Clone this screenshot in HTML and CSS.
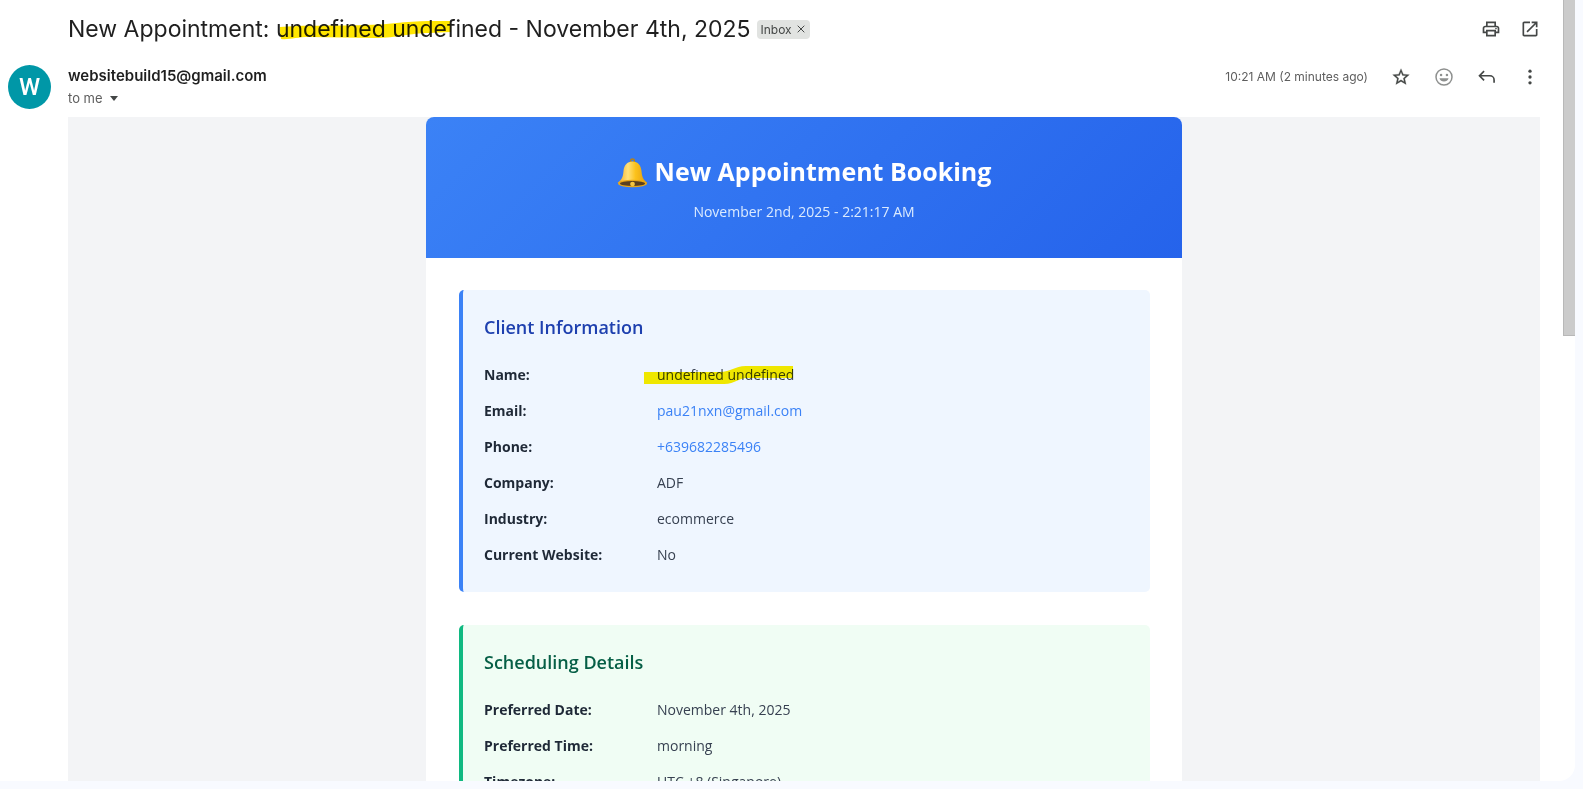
FILE: index.html
```html
<!DOCTYPE html>
<html lang="en">
<head>
<meta charset="utf-8">
<meta name="viewport" content="width=device-width, initial-scale=1">
<title>New Appointment</title>
<link rel="stylesheet" href="styles.css">
</head>
<body>
<div class="app">
  <main class="pane">
    <div class="mail">
      <header class="subject-bar">
        <h1 class="subject">New Appointment: <span class="marked">undefined undefined<svg class="marker marker-subject" viewBox="0 0 172 20" preserveAspectRatio="none" aria-hidden="true"><path d="M1 7 C20 5 60 6 85 5 C110 5 125 1 150 1 L171 1 L172 12 L150 13 C130 13 120 18 95 18 L30 17 C18 17 10 20 2 19 L1 12 Z"/></svg></span> - November 4th, 2025</h1>
        <div class="chip">
          <a class="chip-label" href="#">Inbox</a>
          <button class="chip-close" type="button" aria-label="Remove label Inbox"><svg viewBox="0 0 8 8"><path d="M.7.7l6.6 6.6M7.3.7L.7 7.3" fill="none" stroke="currentColor"/></svg></button>
        </div>
        <div class="actions">
          <button class="icon" type="button" aria-label="Print all"><svg viewBox="0 0 24 24"><path d="M19 8h-1V3H6v5H5c-1.660 0-3 1.340-3 3v6h4v4h12v-4h4v-6c0-1.660-1.340-3-3-3zM8 5h8v3H8V5zm8 14H8v-4h8v4zm2-4v-2H6v2H4v-4c0-.55.45-1 1-1h14c.55 0 1 .45 1 1v4h-2z"/><circle cx="18" cy="11.500" r="1"/></svg></button>
          <button class="icon" type="button" aria-label="Open in new window"><svg viewBox="0 0 24 24"><path d="M19 19H5V5h7V3H5c-1.110 0-2 .9-2 2v14c0 1.100.89 2 2 2h14c1.100 0 2-.9 2-2v-7h-2v7zM14 3v2h3.590l-9.830 9.830 1.410 1.410L19 6.410V10h2V3h-7z"/></svg></button>
        </div>
      </header>

      <div class="sender-bar">
        <span class="avatar" aria-hidden="true">W</span>
        <div class="sender">
          <span class="sender-name">websitebuild15@gmail.com</span>
          <button class="recipient" type="button">to me <span class="caret"></span></button>
        </div>
        <div class="meta">
          <time class="time">10:21 AM (2 minutes ago)</time>
          <button class="icon" type="button" aria-label="Star"><svg viewBox="0 0 24 24"><path d="M22 9.240l-7.190-.62L12 2 9.190 8.630 2 9.240l5.460 4.730L5.820 21 12 17.270 18.180 21l-1.630-7.030L22 9.240zM12 15.400l-3.760 2.270 1-4.280-3.320-2.880 4.380-.38L12 6.100l1.710 4.040 4.380.38-3.320 2.880 1 4.280L12 15.400z" stroke="currentColor" stroke-width=".3"/></svg></button>
          <button class="icon icon-soft" type="button" aria-label="Add reaction"><svg viewBox="0 0 24 24"><circle cx="12" cy="12" r="9.600" fill="none" stroke="currentColor" stroke-width="1.800"/><circle cx="8.500" cy="9.500" r="1.500"/><circle cx="15.500" cy="9.500" r="1.500"/><path d="M6.500 13.500h11c-.8 2.500-2.900 4-5.500 4s-4.700-1.500-5.500-4z"/></svg></button>
          <button class="icon" type="button" aria-label="Reply"><svg viewBox="0 0 24 24"><path d="M8.500 5L3 10.500 8.500 16M3 10.500h12.500a5 5 0 0 1 5 5V19" fill="none" stroke="currentColor" stroke-width="2"/></svg></button>
          <button class="icon" type="button" aria-label="More"><svg viewBox="0 0 24 24"><circle cx="12" cy="5" r="2"/><circle cx="12" cy="12" r="2"/><circle cx="12" cy="19" r="2"/></svg></button>
        </div>
      </div>

      <div class="mail-body">
        <article class="card">
          <header class="banner">
            <h2 class="banner-title">
              <svg class="bell" viewBox="0 0 30 30" aria-hidden="true">
                <defs><linearGradient id="gold"><stop offset="0" stop-color="#f2a71b"/><stop offset=".35" stop-color="#ffe07a"/><stop offset=".6" stop-color="#fcc21b"/><stop offset="1" stop-color="#e09a10"/></linearGradient></defs>
                <circle cx="15.500" cy="2.800" r="1.900" fill="none" stroke="#b5801c" stroke-width="1.500"/>
                <path d="M15.500 3.500c-5.500 0-8.500 4-9 9.500-.5 6-1.500 8.500-6 12h30c-4.500-3.500-5.500-6-6-12-.5-5.500-3.500-9.500-9-9.500z" fill="url(#gold)"/>
                <ellipse cx="15.500" cy="25.500" rx="14.500" ry="3.800" fill="#e8a71b"/>
                <ellipse cx="15.500" cy="25.500" rx="12.500" ry="2.500" fill="#5a3f20"/>
                <ellipse cx="15.500" cy="26" rx="2.400" ry="2.200" fill="#f4c542"/>
              </svg>
              <span>New Appointment Booking</span>
            </h2>
            <p class="banner-date">November 2nd, 2025 - 2:21:17 AM</p>
          </header>

          <div class="sections">
            <section class="section section-client">
              <h3 class="section-title">Client Information</h3>
              <table class="details">
                <tr><th scope="row">Name:</th><td><span class="marked">undefined undefined<svg class="marker marker-name" viewBox="0 0 150 19" preserveAspectRatio="none" aria-hidden="true"><path d="M0 6H75C88 6 90 0 102 0H149V12H104C93 12 92 18 80 18H0Z"/></svg></span></td></tr>
                <tr><th scope="row">Email:</th><td><a href="mailto:pau21nxn@gmail.com">pau21nxn@gmail.com</a></td></tr>
                <tr><th scope="row">Phone:</th><td><a href="tel:+639682285496">+639682285496</a></td></tr>
                <tr><th scope="row">Company:</th><td>ADF</td></tr>
                <tr><th scope="row">Industry:</th><td>ecommerce</td></tr>
                <tr><th scope="row">Current Website:</th><td>No</td></tr>
              </table>
            </section>

            <section class="section section-schedule">
              <h3 class="section-title">Scheduling Details</h3>
              <table class="details">
                <tr><th scope="row">Preferred Date:</th><td>November 4th, 2025</td></tr>
                <tr><th scope="row">Preferred Time:</th><td>morning</td></tr>
                <tr><th scope="row">Timezone:</th><td>UTC +8 (Singapore)</td></tr>
              </table>
            </section>
          </div>
        </article>
      </div>
    </div>
    <div class="scrollbar" aria-hidden="true"><div class="thumb"></div></div>
  </main>
</div>
</body>
</html>
```
FILE: styles.css
```css
* {
  box-sizing: border-box;
}

body {
  margin: 0;
  background: #f8fafd;
  color: #1f1f1f;
  font-family: Inter, Roboto, "Liberation Sans", sans-serif;
}

h1, h2, h3, p {
  margin: 0;
}

button {
  padding: 0;
  border: 0;
  background: none;
  color: inherit;
  font: inherit;
  cursor: pointer;
}

a {
  color: inherit;
  text-decoration: none;
}

svg {
  display: block;
  fill: currentColor;
}

.app {
  height: 100vh;
  padding: 0 8px 8px 0;
  background: #f8faff;
}

.pane {
  display: flex;
  height: 100%;
  overflow: hidden;
  border-radius: 0 0 16px 0;
  background: #fff;
}

.mail {
  flex: 1;
  min-width: 0;
  padding: 0 23px 0 8px;
}

.scrollbar {
  width: 12px;
}

.thumb {
  height: 43%;
  border: solid #b8b8b8;
  border-width: 0 0 1px 1px;
  background: #cbcbcb;
}

/* Subject */
.subject-bar {
  display: flex;
  align-items: center;
  height: 58px;
  padding-left: 60px;
}

.subject {
  font-size: 23px;
  font-weight: 400;
  line-height: 32px;
  white-space: nowrap;
}

.marked {
  position: relative;
}

.marker {
  position: absolute;
  fill: #ffe600;
  mix-blend-mode: multiply;
}

.marker-subject {
  top: 5px;
  left: 3px;
  width: 172px;
  height: 20px;
}

.marker-name {
  top: 1px;
  left: -13px;
  width: 150px;
  height: 19px;
  fill: #fff000;
}

.chip {
  display: flex;
  align-items: center;
  gap: 5px;
  height: 19px;
  margin-left: 6px;
  padding: 0 5px 0 4px;
  border-radius: 4px;
  background: #e1e3e1;
  color: #444746;
  font-size: 12px;
}

.chip-close svg {
  width: 8px;
  height: 8px;
}

.actions {
  display: flex;
  gap: 19px;
  margin-left: auto;
}

.icon {
  color: #444746;
}

.icon svg {
  width: 20px;
  height: 20px;
}

.icon-soft {
  color: #8e908f;
}

/* Sender */
.sender-bar {
  display: flex;
  align-items: flex-start;
  height: 59px;
  padding-top: 7px;
}

.avatar {
  flex: none;
  width: 43px;
  height: 44px;
  margin-right: 17px;
  border-radius: 50%;
  background: #0097a7;
  color: #fff;
  font-family: Roboto, sans-serif;
  font-size: 24px;
  font-weight: 500;
  line-height: 45px;
  text-align: center;
}

.sender {
  display: flex;
  flex-direction: column;
  align-items: flex-start;
}

.sender-name {
  font-size: 15px;
  font-weight: 600;
  line-height: 22px;
}

.recipient {
  display: flex;
  align-items: center;
  gap: 7px;
  color: #5e5e5e;
  font-size: 13px;
  line-height: 22px;
}

.caret {
  border: 4px solid transparent;
  border-top: 5px solid #444746;
  border-bottom: 0;
}

.meta {
  display: flex;
  align-items: center;
  gap: 23px;
  height: 23px;
  margin-left: auto;
}

.time {
  color: #5e5e5e;
  font-size: 12px;
}

/* Message */
.mail-body {
  margin-left: 60px;
  background: #f3f4f6;
  font-family: "Open Sans", "Noto Sans", sans-serif;
}

.card {
  max-width: 756px;
  margin: 0 auto;
  overflow: hidden;
  border-radius: 8px;
  background: #fff;
}

.banner {
  padding: 36px 32px 34px;
  background: linear-gradient(135deg, #3b82f6 0%, #2563eb 100%);
  color: #fff;
  text-align: center;
}

.banner-title {
  display: flex;
  align-items: center;
  justify-content: center;
  gap: 8px;
  font-size: 25px;
  font-weight: 700;
  line-height: 36px;
}

.bell {
  width: 30px;
  height: 30px;
  margin-top: 4px;
}

.banner-date {
  margin-top: 10px;
  color: #dbeafe;
  font-size: 14px;
  line-height: 25px;
}

.sections {
  display: grid;
  gap: 33px;
  padding: 32px 32px 32px 33px;
}

.section {
  padding: 24px 21px 19px;
  border-left: 4px solid;
  border-radius: 5px;
}

.section-client {
  border-color: #3b82f6;
  background: #eff6ff;
}

.section-schedule {
  border-color: #10b981;
  background: #f0fdf4;
}

.section-title {
  margin-bottom: 17px;
  color: #1e40af;
  font-size: 18px;
  font-weight: 600;
  line-height: 26px;
}

.section-schedule .section-title {
  color: #065f46;
}

.details {
  width: 100%;
  border-collapse: collapse;
  color: #374151;
  font-size: 14px;
  line-height: 20px;
}

.details th,
.details td {
  padding: 8px 0;
  text-align: left;
}

.details th {
  width: 173px;
  color: #1f2937;
  font-weight: 700;
}

.details a {
  color: #3b82f6;
}
```
